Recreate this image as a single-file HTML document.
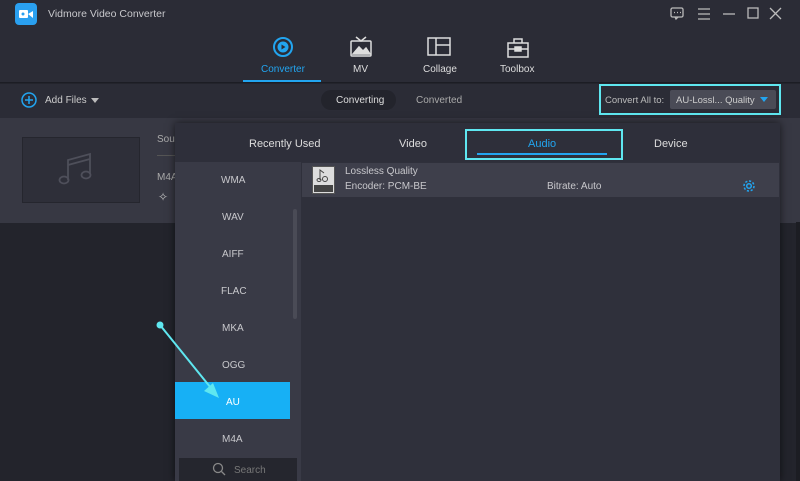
<!DOCTYPE html>
<html><head><meta charset="utf-8"><style>
*{margin:0;padding:0;box-sizing:border-box}
body{width:800px;height:481px;overflow:hidden;background:#23242c;font-family:"Liberation Sans",sans-serif;position:relative;color:#ccc}
.abs{position:absolute}
.t{font-size:10px;color:#c8c8cc}
</style></head><body>
<div class="abs" style="left:0;top:0;width:800px;height:83px;background:#2b2c36;border-bottom:1px solid #1c1d24"></div>
<div class="abs" style="left:15px;top:3px;width:22px;height:22px;background:#2aa0f0;border-radius:4px"></div>
<svg class="abs" style="left:18px;top:8px" width="16" height="12"><rect x="1" y="2" width="9" height="8" fill="#fff" rx="1"/><path d="M10 6l5-3v7z" fill="#fff"/><circle cx="5" cy="6" r="1.5" fill="#2aa0f0"/></svg>
<div class="abs" style="left:48px;top:8px;font-size:10.5px;color:#c8c8cc">Vidmore Video Converter</div>
<svg class="abs" style="left:668px;top:6px" width="122" height="16" fill="none" stroke="#bbb" stroke-width="1.3">
<rect x="3" y="2" width="12" height="9" rx="1.5"/><path d="M7 11l1 2 2-2"/><path d="M6 6.5h1M9 6.5h1M12 6.5h1"/>
<path d="M30 3h12M30 8h12M30 13h12"/>
<path d="M55 8h12"/>
<rect x="80" y="2" width="10" height="10"/>
<path d="M102 2l11 11M113 2l-11 11"/></svg>
<svg class="abs" style="left:271px;top:35px" width="24" height="24" fill="none" stroke="#22a5f0" stroke-width="2"><circle cx="12" cy="12" r="9"/><circle cx="12" cy="12" r="5.5" fill="#22a5f0" stroke="none"/><path d="M10.5 9.5v5l4-2.5z" fill="#2b2c36" stroke="none"/></svg>
<div class="abs" style="left:261px;top:64px;font-size:10px;color:#22a5f0">Converter</div>
<div class="abs" style="left:243px;top:80px;width:78px;height:2px;background:#22a5f0"></div>
<svg class="abs" style="left:349px;top:36px" width="24" height="22" fill="none" stroke="#ddd" stroke-width="1.5"><rect x="2" y="5" width="20" height="15" rx="1"/><path d="M7 1l5 4 5-4"/><path d="M4 18l6-7 4 4 3-3 4 6z" fill="#ddd"/></svg>
<div class="abs" style="left:353px;top:64px;font-size:10px;color:#ddd">MV</div>
<svg class="abs" style="left:426px;top:37px" width="26" height="20" fill="none" stroke="#ddd" stroke-width="1.5"><rect x="2" y="1" width="22" height="17"/><path d="M10 1v17M10 8h14"/></svg>
<div class="abs" style="left:423px;top:64px;font-size:10px;color:#ddd">Collage</div>
<svg class="abs" style="left:506px;top:37px" width="24" height="22" fill="none" stroke="#ddd" stroke-width="1.5"><rect x="2" y="6" width="20" height="14"/><path d="M8 6V2h8v4M2 12h20"/><rect x="9" y="10" width="6" height="4" fill="#ddd"/></svg>
<div class="abs" style="left:500px;top:64px;font-size:10px;color:#ddd">Toolbox</div>
<div class="abs" style="left:0;top:84px;width:800px;height:34px;background:#2b2c36"></div>
<svg class="abs" style="left:21px;top:92px" width="16" height="16" fill="none" stroke="#22a5f0" stroke-width="1.5"><circle cx="8" cy="8" r="7"/><path d="M8 4v8M4 8h8"/></svg>
<div class="abs t" style="left:45px;top:95px;color:#ccc">Add Files</div>
<div class="abs" style="left:91px;top:98px;border:4px solid transparent;border-top:5px solid #bbb"></div>
<div class="abs" style="left:321px;top:90px;width:75px;height:20px;border-radius:10px;background:#23242c"></div>
<div class="abs t" style="left:336px;top:95px;color:#ddd">Converting</div>
<div class="abs t" style="left:416px;top:95px;color:#aaa">Converted</div>
<div class="abs" style="left:599px;top:84px;width:182px;height:31px;border:2px solid #5fe7f0"></div>
<div class="abs" style="left:605px;top:95px;font-size:9.5px;color:#bbb">Convert All to:</div>
<div class="abs" style="left:670px;top:90px;width:106px;height:19px;background:#4a4b56;border-radius:2px"></div>
<div class="abs" style="left:676px;top:95px;font-size:9.5px;color:#ccc">AU-Lossl... Quality</div>
<div class="abs" style="left:760px;top:97px;border:4px solid transparent;border-top:5px solid #22a5f0"></div>
<div class="abs" style="left:0;top:118px;width:800px;height:105px;background:#373843"></div>
<div class="abs" style="left:22px;top:137px;width:118px;height:66px;background:#2e2f39;border:1px solid #25262e"></div>
<svg class="abs" style="left:58px;top:152px" width="36" height="36" fill="none" stroke="#4e4f5a" stroke-width="1.8"><path d="M10 28V8l22-6v20"/><path d="M10 13l22-6"/><ellipse cx="6" cy="28" rx="4.5" ry="3.5"/><ellipse cx="28" cy="23" rx="4.5" ry="3.5"/></svg>
<div class="abs t" style="left:157px;top:134px;color:#aaa">Sou</div>
<div class="abs t" style="left:157px;top:172px;color:#aaa">M4A</div>
<div class="abs" style="left:157px;top:155px;width:18px;height:1px;background:#555"></div>
<div class="abs" style="left:158px;top:190px;font-size:12px;color:#bbb">✧</div>
<div class="abs" style="left:796px;top:222px;width:4px;height:259px;background:#1c1d23"></div>
<div class="abs" style="left:175px;top:123px;width:605px;height:358px;background:#2f303b;box-shadow:0 0 8px rgba(0,0,0,.6)"></div>
<div class="abs" style="left:175px;top:123px;width:605px;height:39px;background:#2e2f3a"></div>
<div class="abs" style="left:249px;top:138px;font-size:11px;color:#ddd">Recently Used</div>
<div class="abs" style="left:399px;top:138px;font-size:11px;color:#ddd">Video</div>
<div class="abs" style="left:465px;top:129px;width:158px;height:31px;border:2px solid #5fe7f0"></div>
<div class="abs" style="left:528px;top:138px;font-size:11px;color:#22a5f0">Audio</div>
<div class="abs" style="left:477px;top:153px;width:130px;height:2px;background:#22a5f0"></div>
<div class="abs" style="left:654px;top:138px;font-size:11px;color:#ddd">Device</div>
<div class="abs" style="left:175px;top:162px;width:126px;height:319px;background:#393a46"></div>
<div class="abs" style="left:293px;top:209px;width:4px;height:110px;background:#4a4b56;border-radius:2px"></div>
<div class="abs" style="left:175px;top:382px;width:115px;height:37px;background:#17b0f5"></div>
<div class="abs t" style="left:221px;top:175px">WMA</div>
<div class="abs t" style="left:222px;top:212px">WAV</div>
<div class="abs t" style="left:222px;top:249px">AIFF</div>
<div class="abs t" style="left:221px;top:286px">FLAC</div>
<div class="abs t" style="left:222px;top:323px">MKA</div>
<div class="abs t" style="left:222px;top:360px">OGG</div>
<div class="abs t" style="left:226px;top:397px;color:#fff">AU</div>
<div class="abs t" style="left:222px;top:434px">M4A</div>
<div class="abs" style="left:179px;top:458px;width:118px;height:23px;background:#25262e"></div>
<svg class="abs" style="left:212px;top:462px" width="14" height="14" fill="none" stroke="#888" stroke-width="1.3"><circle cx="6" cy="6" r="4.5"/><path d="M9.5 9.5l3.5 3.5"/></svg>
<div class="abs t" style="left:234px;top:465px;color:#777">Search</div>
<div class="abs" style="left:302px;top:163px;width:477px;height:34px;background:#3e3f4b"></div>
<div class="abs" style="left:312px;top:166px;width:23px;height:28px;background:#ddd;border:1px solid #555"></div>
<div class="abs" style="left:314px;top:185px;width:19px;height:7px;background:#444"></div>
<svg class="abs" style="left:316px;top:168px" width="14" height="16" fill="none" stroke="#444" stroke-width="1"><path d="M4 12V2l4 3"/><ellipse cx="3" cy="12" rx="2" ry="1.5"/><circle cx="9" cy="11" r="2.5"/></svg>
<div class="abs t" style="left:345px;top:166px">Lossless Quality</div>
<div class="abs t" style="left:345px;top:181px">Encoder: PCM-BE</div>
<div class="abs t" style="left:547px;top:181px">Bitrate: Auto</div>
<svg class="abs" style="left:742px;top:179px" width="14" height="14" fill="none" stroke="#22a5f0" stroke-width="1.5"><circle cx="7" cy="7" r="2.3"/><circle cx="7" cy="7" r="5" stroke-dasharray="2.2 1.7"/></svg>
<svg class="abs" style="left:0;top:0" width="800" height="481"><circle cx="160" cy="325" r="3.5" fill="#5fe7f0"/><path d="M160 325L215 393" stroke="#5fe7f0" stroke-width="2"/><path d="M219 398l-15-7 9-8z" fill="#5fe7f0"/></svg>
</body></html>
